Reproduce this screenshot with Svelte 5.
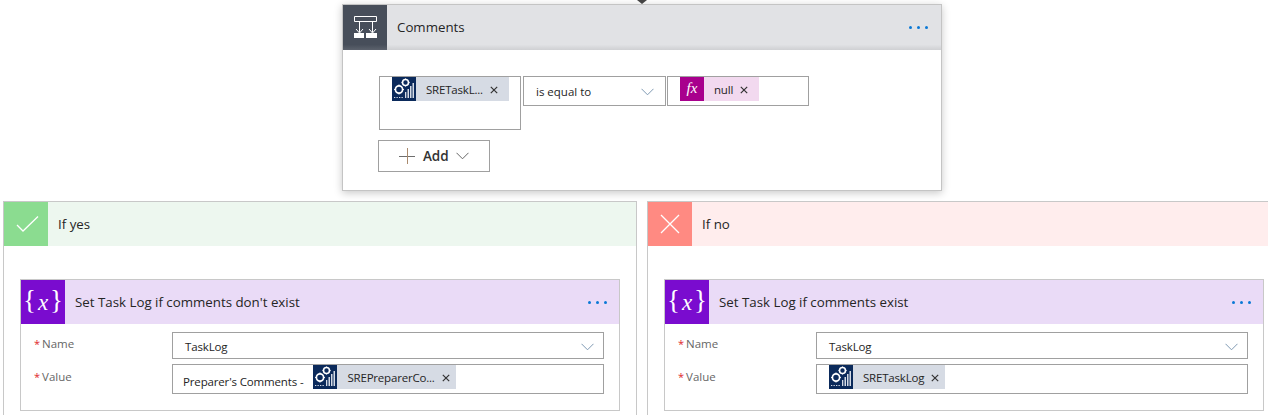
<script>
  const branches = [
    {
      kind: 'yes',
      label: 'If yes',
      title: "Set Task Log if comments don't exist",
      prefix: "Preparer's Comments -",
      token: 'SREPreparerCo...'
    },
    {
      kind: 'no',
      label: 'If no',
      title: 'Set Task Log if comments exist',
      prefix: '',
      token: 'SRETaskLog'
    }
  ];
</script>

{#snippet gears()}
  <svg class="token-icon" viewBox="0 0 24 24" aria-hidden="true">
    <rect width="24" height="24" fill="#0b2a5b" />
    <g fill="none" stroke="#fff">
      <circle cx="7" cy="12.500" r="3.600" stroke-width="1.700" />
      <circle cx="13.500" cy="5.500" r="3" stroke-width="1.600" />
      <path d="M7 7.600v1.200M7 16.200v1.200M2.100 12.500h1.200M10.700 12.500h1.200M13.500 1.500v1.100M13.500 8.400v1.100M9.500 5.500h1.100M16.500 5.500h1.100" stroke-width="1.100" />
    </g>
    <g fill="#d5dbe6">
      <rect x="13" y="15" width="1.300" height="6" />
      <rect x="15.500" y="12" width="1.500" height="9" />
      <rect x="18" y="9" width="1.500" height="12" />
      <rect x="20.500" y="6" width="1.500" height="15" />
      <rect x="2" y="20" width="1.300" height="1" />
      <rect x="4.500" y="20" width="1.300" height="1" />
      <rect x="7" y="20" width="1.300" height="1" />
      <rect x="9.500" y="20" width="1.300" height="1" />
    </g>
  </svg>
{/snippet}

{#snippet chevron()}
  <svg class="chevron" viewBox="0 0 13 8" aria-hidden="true">
    <path d="M.5.8 6.500 6.800 12.500.8" fill="none" stroke="#7f99b3" />
  </svg>
{/snippet}

{#snippet dots()}
  <div class="dots"><i></i><i></i><i></i></div>
{/snippet}

{#snippet close()}
  <svg class="close" viewBox="0 0 8 8" aria-hidden="true">
    <path d="M.8.8 7.200 7.200M7.200.8.800 7.200" fill="none" stroke="#333" stroke-width="1.200" />
  </svg>
{/snippet}

<div class="page">
  <div class="junction"></div>

  <section class="condition">
    <header class="cond-head">
      <div class="cond-icon">
        <svg viewBox="0 0 44 45" width="44" height="45" aria-hidden="true">
          <path d="M11.500 11.500h22v5h-22zM16.500 17v10M29.500 17v10M13 24l3.500 4 3.500-4M26 24l3.500 4 3.500-4" fill="none" stroke="#fff" />
          <path d="M11 28h10v5H11zM23 28h11v5H23z" fill="#fff" />
        </svg>
      </div>
      <span class="head-title">Comments</span>
      {@render dots()}
    </header>
    <div class="cond-body">
      <div class="cond-row">
        <div class="box box-left">
          <div class="token wide">
            {@render gears()}
            <span class="token-text">SRETaskL...</span>
            {@render close()}
          </div>
        </div>
        <div class="box box-op">
          <span>is equal to</span>
          {@render chevron()}
        </div>
        <div class="box box-right">
          <div class="token fx">
            <span class="fx-icon">fx</span>
            <span class="token-text">null</span>
            {@render close()}
          </div>
        </div>
      </div>
      <button class="add">
        <svg viewBox="0 0 16 16" width="16" height="16" aria-hidden="true">
          <path d="M0 8.500h16" stroke="#6e6e6e" />
          <path d="M8.500 0v16" stroke="#a98a6d" />
        </svg>
        <span>Add</span>
        <svg class="add-chevron" viewBox="0 0 13 8" aria-hidden="true">
          <path d="M.5.8 6.500 6.800 12.500.8" fill="none" stroke="#666" />
        </svg>
      </button>
    </div>
  </section>

  <div class="branches">
    {#each branches as b (b.kind)}
      <section class="branch {b.kind}">
        <header class="branch-head">
          <div class="branch-icon">
            <svg viewBox="0 0 44 44" width="44" height="44" aria-hidden="true">
              {#if b.kind === 'yes'}
                <path d="M13 23l6 6 15-14.500" fill="none" stroke="#fff" stroke-width="1.300" />
              {:else}
                <path d="M13 13l18 18M31 13 13 31" fill="none" stroke="#fff" stroke-width="1.300" />
              {/if}
            </svg>
          </div>
          <span class="head-title">{b.label}</span>
        </header>
        <div class="branch-body">
          <div class="card">
            <header class="card-head">
              <div class="var-icon"><span>&#123;</span><em>x</em><span>&#125;</span></div>
              <span class="head-title">{b.title}</span>
              {@render dots()}
            </header>
            <div class="card-form">
              <div class="label"><b>*</b>Name</div>
              <div class="box field name-field">
                <span>TaskLog</span>
                {@render chevron()}
              </div>
              <div class="label value-label"><b>*</b>Value</div>
              <div class="box field value-field" class:has-prefix={b.prefix}>
                {#if b.prefix}<span class="prefix">{b.prefix}</span>{/if}
                <div class="token">
                  {@render gears()}
                  <span class="token-text">{b.token}</span>
                  {@render close()}
                </div>
              </div>
            </div>
          </div>
        </div>
      </section>
    {/each}
  </div>
</div>

<style>
  :global(body) {
    background: #fff;
  }

  .page {
    position: relative;
    width: 1268px;
    height: 415px;
    overflow: hidden;
    font-family: "Open Sans", "Noto Sans", sans-serif;
    color: #252525;
    padding-top: 4px;
    box-sizing: border-box;
  }

  .junction {
    position: absolute;
    left: 637px;
    top: 0;
    width: 0;
    height: 0;
    border-left: 5px solid transparent;
    border-right: 5px solid transparent;
    border-top: 4px solid #444;
  }

  .head-title {
    font-size: 13.300px;
    margin-left: 10px;
    white-space: nowrap;
  }

  .dots {
    display: flex;
    gap: 5px;
    margin-left: auto;
  }

  .dots i {
    display: block;
    width: 3px;
    height: 3px;
    border-radius: 50%;
    background: #0a78d6;
  }

  .condition {
    width: 600px;
    height: 187px;
    margin-left: 342px;
    box-sizing: border-box;
    border: 1px solid #c4c4c4;
    box-shadow: 0 2px 8px rgba(0, 0, 0, 0.22);
    background: #fff;
  }

  .cond-head {
    display: flex;
    align-items: center;
    height: 45px;
    padding-right: 13px;
    background: linear-gradient(#e1e2e5 88%, #cfd0d3);
  }

  .cond-head .head-title {
    margin-bottom: 2px;
  }

  .cond-icon {
    width: 44px;
    height: 45px;
    background: linear-gradient(#474e5a 88%, #5c626d);
  }

  .cond-icon svg {
    display: block;
  }

  .cond-body {
    padding: 26px 0 0 35px;
  }

  .cond-row {
    display: flex;
    align-items: flex-start;
    gap: 1px;
    margin-left: 1px;
  }

  .box {
    display: flex;
    box-sizing: border-box;
    border: 1px solid #a0a0a0;
    background: #fff;
    font-size: 11.500px;
    letter-spacing: -0.150px;
  }

  .box-left {
    width: 142px;
    height: 54px;
    padding-left: 12px;
    margin-right: 1px;
  }

  .box-op {
    width: 143px;
    height: 30px;
    align-items: center;
    justify-content: space-between;
    padding: 1px 11px 0 12px;
    letter-spacing: 0;
  }

  .box-right {
    width: 142px;
    height: 30px;
    padding-left: 12px;
  }

  .token {
    display: flex;
    align-items: center;
    height: 24px;
    padding-right: 6px;
    background: #d6dbe4;
    font-size: 11.500px;
    letter-spacing: -0.200px;
    white-space: nowrap;
  }

  .token.wide {
    padding-right: 11px;
  }

  .token-icon {
    display: block;
    width: 24px;
    height: 24px;
  }

  .token-text {
    margin-left: 10px;
  }

  .close {
    display: block;
    width: 8px;
    height: 8px;
    margin-left: 7px;
    margin-top: 2px;
  }

  .token.fx {
    background: #f2d9ef;
    padding-right: 11px;
  }

  .fx-icon {
    display: block;
    width: 24px;
    height: 24px;
    background: #a8008d;
    color: #fff;
    font: italic 15px/23px "Liberation Serif", serif;
    text-align: center;
    letter-spacing: 0;
  }

  .chevron {
    display: block;
    width: 13px;
    height: 8px;
  }

  .add {
    display: flex;
    align-items: center;
    width: 112px;
    height: 32px;
    margin-top: 10px;
    padding: 0 0 0 20px;
    box-sizing: border-box;
    border: 1px solid #a0a0a0;
    background: #fff;
    color: #333;
    font-family: inherit;
    font-size: 13.500px;
    font-weight: 600;
    letter-spacing: -0.100px;
  }

  .add span {
    margin-left: 8px;
  }

  .add-chevron {
    width: 13px;
    height: 8px;
    margin-left: 8px;
  }

  .branches {
    display: flex;
    gap: 10px;
    margin: 10px 0 0 3px;
  }

  .branch {
    flex: 0 0 634px;
    height: 240px;
    box-sizing: border-box;
    border: 1px solid #c8c8c8;
  }

  .branch-head {
    display: flex;
    align-items: center;
    height: 44px;
  }

  .branch-icon {
    width: 44px;
    height: 44px;
  }

  .branch-icon svg {
    display: block;
  }

  .yes .branch-head {
    background: #edf7ef;
  }

  .yes .branch-icon {
    background: #8bdc90;
  }

  .no .branch-head {
    background: #ffeded;
  }

  .no .branch-icon {
    background: #ff8a82;
  }

  .branch-body {
    padding: 33px 0 0 16px;
  }

  .card {
    width: 600px;
    height: 132px;
    box-sizing: border-box;
    border: 1px solid #c8c8c8;
  }

  .card-head {
    display: flex;
    align-items: center;
    height: 44px;
    padding-right: 12px;
    background: #eadbf7;
  }

  .var-icon {
    display: flex;
    align-items: center;
    justify-content: center;
    width: 44px;
    height: 44px;
    background: #7a0ccf;
    color: #fff;
    font-family: "Liberation Serif", serif;
    font-size: 27px;
    line-height: 1;
  }

  .var-icon span {
    margin-top: -3px;
  }

  .var-icon em {
    font-size: 23px;
    margin: 0 2px;
  }

  .card-form {
    display: grid;
    grid-template-columns: 151px 432px;
    grid-template-rows: 27px 30px;
    row-gap: 5px;
    padding-top: 8px;
  }

  .label {
    padding: 4px 0 0 13px;
    font-size: 11.500px;
    color: #666;
  }

  .value-label {
    padding-top: 5px;
  }

  .label b {
    color: #e0272b;
    font-weight: 400;
    font-size: 11px;
    margin-right: 2px;
  }

  .field {
    align-items: center;
  }

  .name-field {
    justify-content: space-between;
    padding: 2px 9px 0 12px;
  }

  .value-field {
    align-items: flex-start;
    padding-left: 12px;
  }

  .value-field.has-prefix {
    padding-left: 10px;
  }

  .prefix {
    margin: 9px 10px 0 0;
    white-space: nowrap;
  }
</style>
